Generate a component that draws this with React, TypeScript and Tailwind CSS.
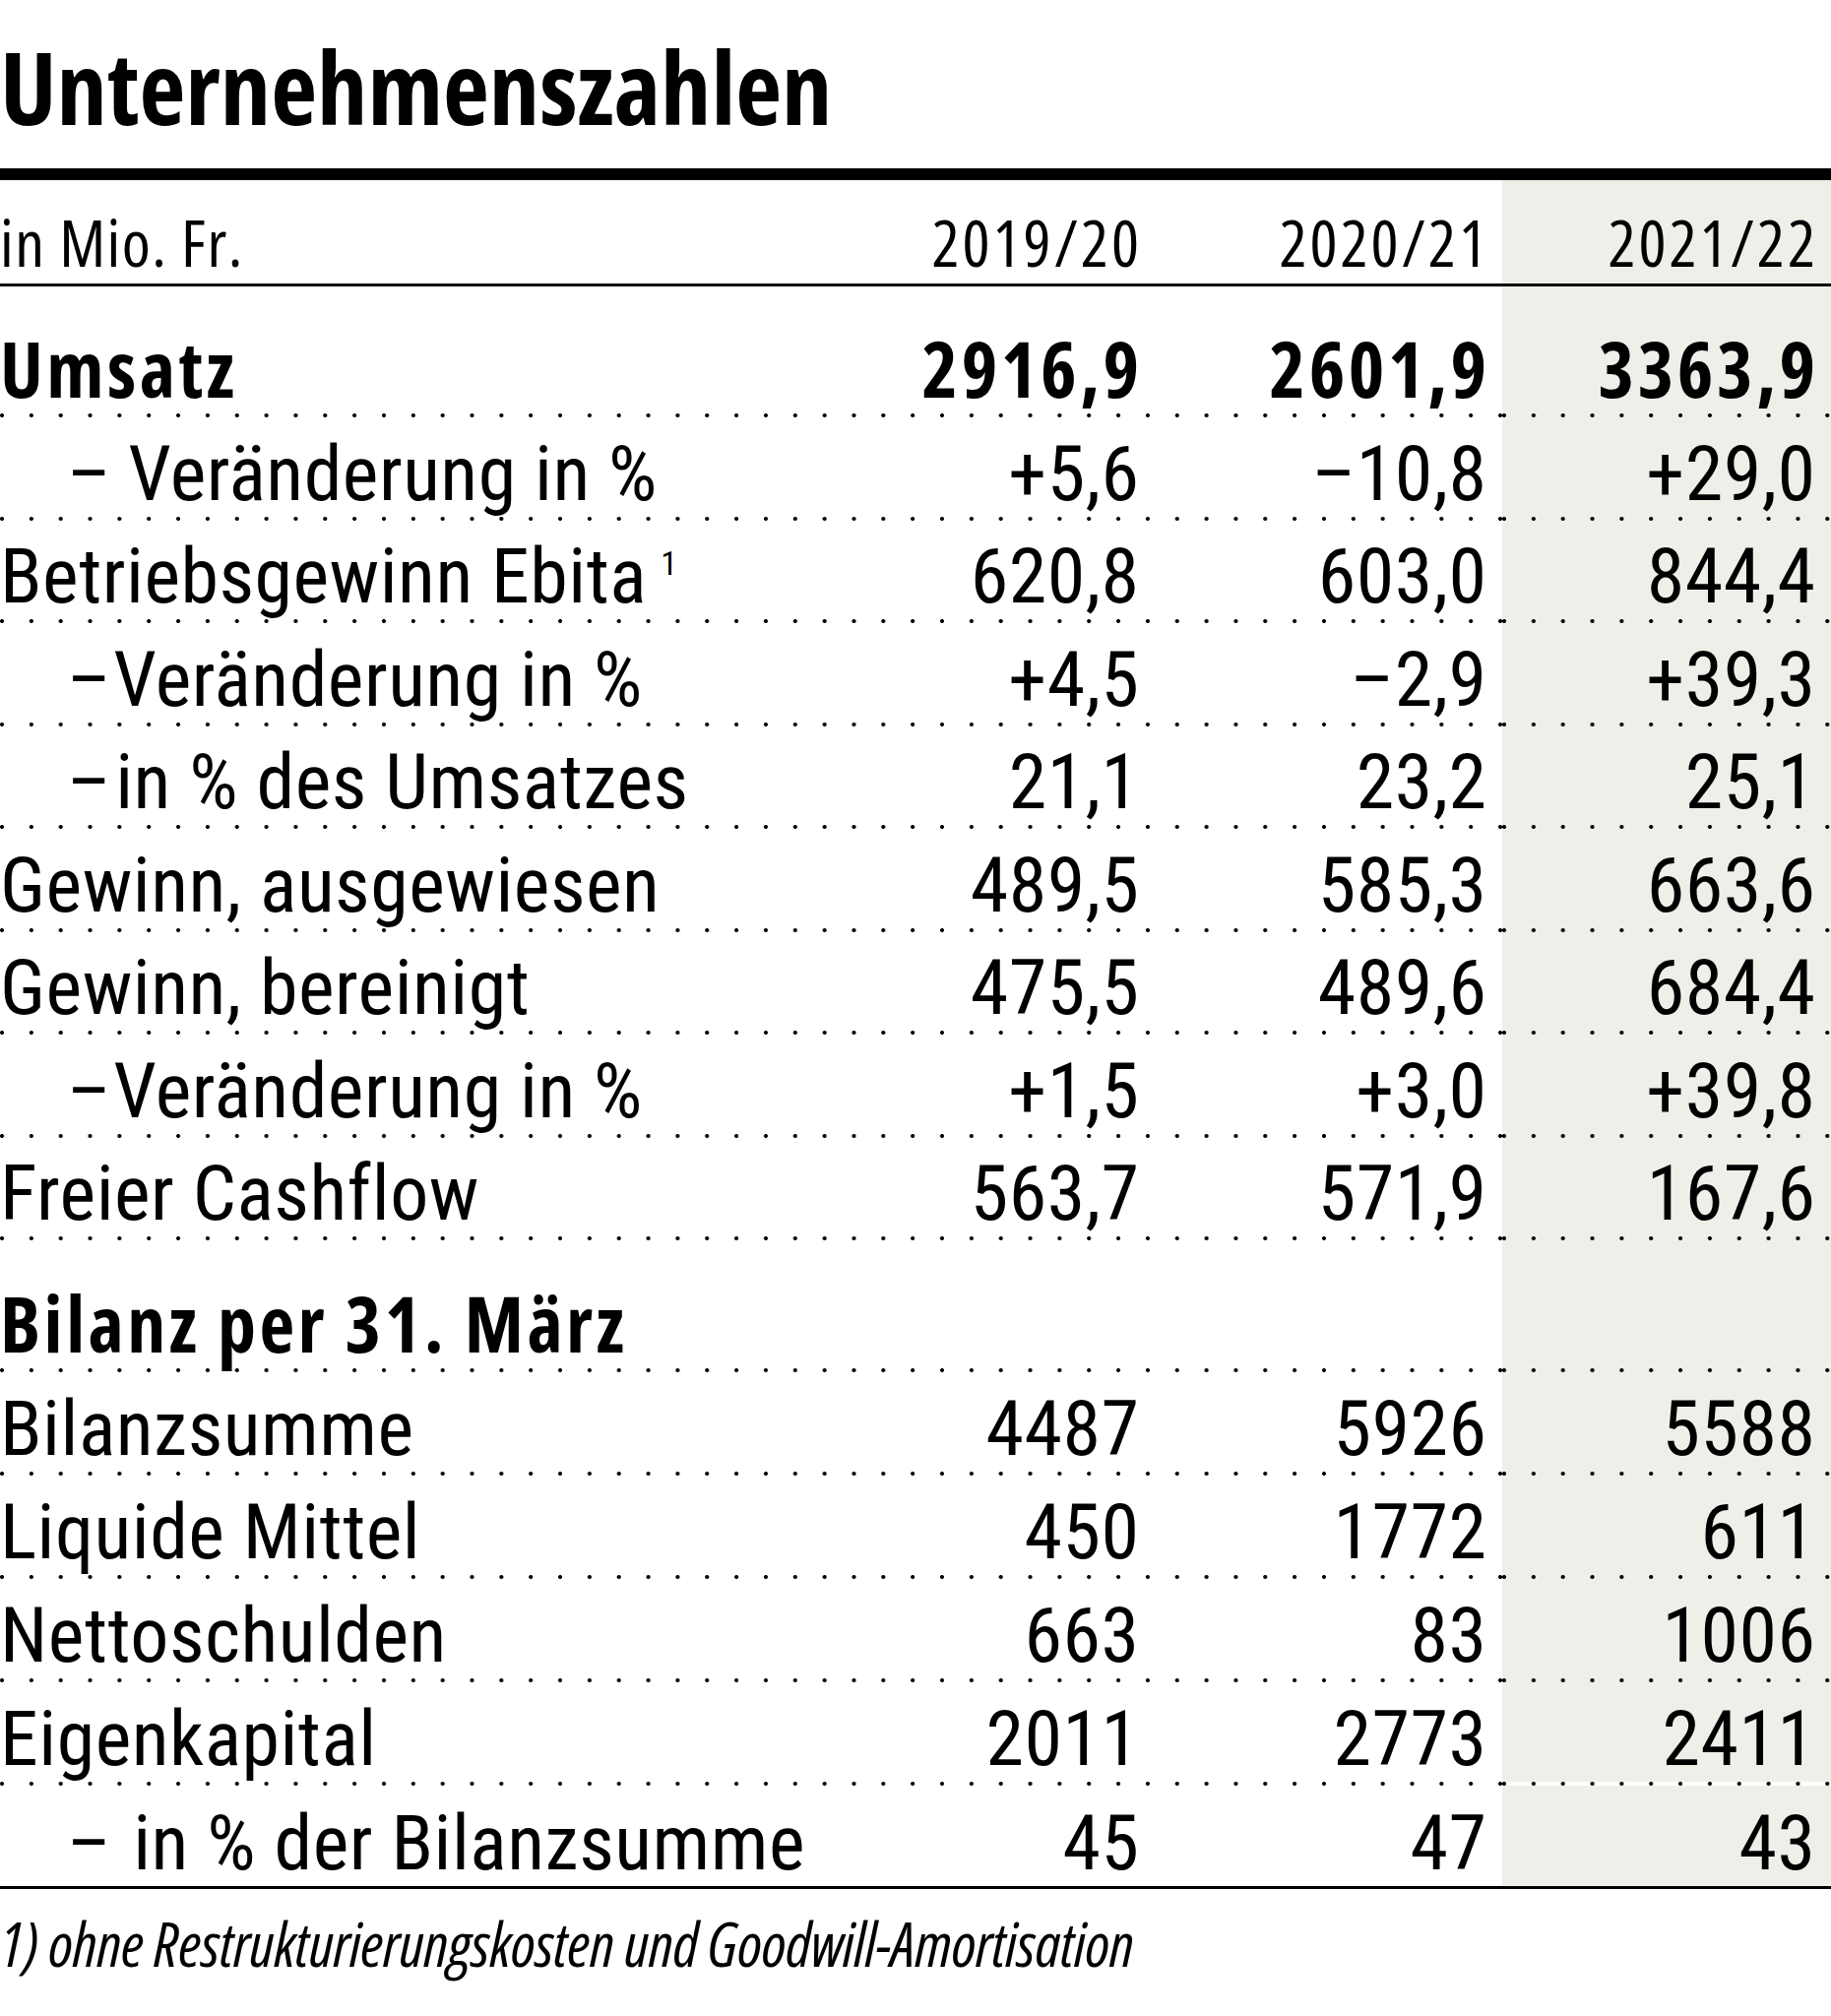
import React from "react";

type Row = {
  label: string;
  bold?: boolean;
  dashGap?: string;
  sup?: string;
  values?: [string, string, string];
  height: string;
};

const FONT = "font-['Open_Sans',sans-serif] [font-stretch:75%]";
const REG =
  "font-['Roboto_Condensed','Open_Sans',sans-serif] [font-stretch:100%] text-[78px] leading-none font-normal tracking-[0.5px]";
const BOLD = "text-[78px] leading-none font-bold [font-stretch:75%] tracking-[3.5px]";

const rowsTop: Row[] = [
  { label: "Umsatz", bold: true, values: ["2916,9", "2601,9", "3363,9"], height: "h-[129px]" },
  { label: "Veränderung in %", dashGap: "ml-[17px]", values: ["+5,6", "–10,8", "+29,0"], height: "h-[100.5px]" },
  { label: "Betriebsgewinn Ebita", sup: "1", values: ["620,8", "603,0", "844,4"], height: "h-[100.5px]" },
  { label: "Veränderung in %", dashGap: "ml-[2px]", values: ["+4,5", "–2,9", "+39,3"], height: "h-[100.5px]" },
  { label: "in % des Umsatzes", dashGap: "ml-[4px]", values: ["21,1", "23,2", "25,1"], height: "h-[100.5px]" },
  { label: "Gewinn, ausgewiesen", values: ["489,5", "585,3", "663,6"], height: "h-[100.5px]" },
  { label: "Gewinn, bereinigt", values: ["475,5", "489,6", "684,4"], height: "h-[100.5px]" },
  { label: "Veränderung in %", dashGap: "ml-[2px]", values: ["+1,5", "+3,0", "+39,8"], height: "h-[100.5px]" },
  { label: "Freier Cashflow", values: ["563,7", "571,9", "167,6"], height: "h-[100.5px]" },
];

const rowsBottom: Row[] = [
  { label: "Bilanz per 31. März", bold: true, height: "h-[130px]" },
  { label: "Bilanzsumme", values: ["4487", "5926", "5588"], height: "h-[101px]" },
  { label: "Liquide Mittel", values: ["450", "1772", "611"], height: "h-[101px]" },
  { label: "Nettoschulden", values: ["663", "83", "1006"], height: "h-[101px]" },
  { label: "Eigenkapital", values: ["2011", "2773", "2411"], height: "h-[101px]" },
];

const lastRow: Row = {
  label: "in % der Bilanzsumme",
  dashGap: "ml-[22px]",
  values: ["45", "47", "43"],
  height: "h-[102px]",
};

const DOTS =
  "h-[4px] bg-repeat-x bg-[radial-gradient(circle_at_2px_2px,#000_1.7px,transparent_2.3px)] bg-size-[29.85px_4px]";

function Dots({ whiteEnd = false }: { whiteEnd?: boolean }) {
  return (
    <div className="flex">
      <div className={`flex-1 ${DOTS}`} />
      <div className={`w-[334px] shrink-0 ${whiteEnd ? "bg-white" : "bg-[#efeee9]"} ${DOTS}`} />
    </div>
  );
}

function Cell({ value, bold, className }: { value?: string; bold?: boolean; className: string }) {
  return (
    <div
      className={`shrink-0 flex items-end justify-end ${bold ? "pb-[7.5px]" : "pb-[3.7px]"} ${className}`}
    >
      <span className={bold ? `${BOLD} -mr-[3.5px]` : `${REG} -mr-[0.5px]`}>{value}</span>
    </div>
  );
}

function DataRow({ row }: { row: Row }) {
  return (
    <div className={`flex ${row.height}`}>
      <div
        className={`flex-1 min-w-0 flex items-end whitespace-nowrap ${row.bold ? "pb-[7.5px]" : "pb-[3.7px]"}`}
      >
        <span className={row.bold ? BOLD : REG}>
          {row.dashGap ? (
            <>
              <span className="ml-[68px]">–</span>
              <span className={row.dashGap}>{row.label}</span>
            </>
          ) : (
            row.label
          )}
          {row.sup && <span className="ml-[14px] text-[34px] align-[28px]">{row.sup}</span>}
        </span>
      </div>
      <Cell value={row.values?.[0]} bold={row.bold} className="w-[356px] pr-[13px]" />
      <Cell value={row.values?.[1]} bold={row.bold} className="w-[356px] pr-[16px]" />
      <Cell value={row.values?.[2]} bold={row.bold} className="w-[334px] pr-[16px] bg-[#efeee9]" />
    </div>
  );
}

export default function App() {
  return (
    <div className={`w-[1860px] h-[2048px] bg-white text-black ${FONT}`}>
      <div className="h-[171px] flex items-end pb-[33px]">
        <h1 className="text-[102.5px] font-bold leading-none">Unternehmenszahlen</h1>
      </div>
      <div className="h-[12px] bg-black" />

      <div className="flex h-[105px] text-[66px] leading-none">
        <div className="flex-1 flex items-end pb-[10.5px] tracking-[1.5px]">in Mio. Fr.</div>
        <div className="w-[356px] shrink-0 flex items-end justify-end pb-[10.5px] pr-[10px] tracking-[3px]">
          2019/20
        </div>
        <div className="w-[356px] shrink-0 flex items-end justify-end pb-[10.5px] pr-[13px] tracking-[3px]">
          2020/21
        </div>
        <div className="w-[334px] shrink-0 flex items-end justify-end pb-[10.5px] pr-[13px] tracking-[3px] bg-[#efeee9]">
          2021/22
        </div>
      </div>
      <div className="h-[3px] bg-black" />

      {rowsTop.map((row, i) => (
        <div key={"t" + i}>
          <DataRow row={row} />
          <Dots />
        </div>
      ))}
      {rowsBottom.map((row, i) => (
        <div key={"b" + i}>
          <DataRow row={row} />
          <Dots whiteEnd={i === rowsBottom.length - 1} />
        </div>
      ))}
      <DataRow row={lastRow} />
      <div className="h-[3px] bg-black" />

      <div className="pt-[24px] text-[62px] italic leading-none tracking-[-0.4px]">
        1) ohne Restrukturierungskosten und Goodwill-Amortisation
      </div>
    </div>
  );
}
